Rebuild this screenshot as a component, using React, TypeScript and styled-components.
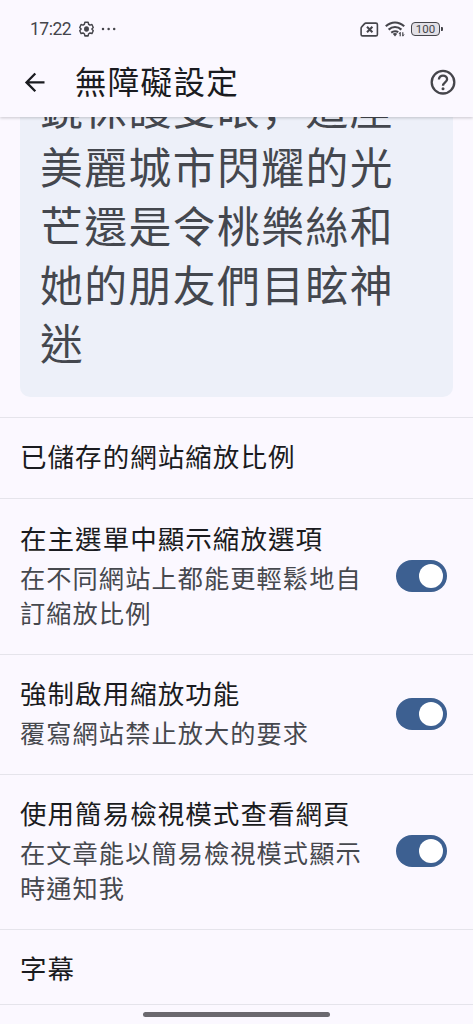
import React from "react";
import styled, { createGlobalStyle } from "styled-components";

const GlobalStyle = createGlobalStyle`
  * { box-sizing: border-box; }
  body {
    margin: 0;
    background: #fbf8ff;
    font-family: "Noto Sans CJK TC", sans-serif;
  }
`;

const Screen = styled.div`
  position: relative;
  display: flex;
  flex-direction: column;
  width: 473px;
  height: 1024px;
  overflow: hidden;
  background: #fbf8ff;
`;

const Header = styled.header`
  position: relative;
  z-index: 1;
  flex: none;
  height: 117px;
  background: #fbf8ff;
  box-shadow: 0 1px 3px rgba(0, 0, 0, 0.2);
`;

const StatusBar = styled.div`
  display: flex;
  align-items: center;
  height: 47px;
  padding: 11px 30px 0;
  color: #45454b;
`;

const Clock = styled.span`
  width: 49px;
  font: 400 17.5px/20px Roboto, sans-serif;
  letter-spacing: -0.5px;
`;

const StatusIcons = styled.div`
  display: flex;
  align-items: center;
  gap: 6px;
  margin-left: auto;
`;

const Toolbar = styled.div`
  display: flex;
  align-items: center;
  height: 70px;
  padding: 0 16px 0 22px;
  color: #1a1b20;
`;

const Title = styled.h1`
  flex: 1;
  margin: 0 0 4px 27px;
  font-size: 31.5px;
  line-height: 44px;
  font-weight: 400;
  letter-spacing: 1.3px;
`;

const PreviewArea = styled.section`
  flex: none;
  display: flex;
  flex-direction: column;
  justify-content: flex-end;
  height: 300px;
  padding: 0 20px 20px;
  overflow: hidden;
`;

const PreviewCard = styled.p`
  flex: none;
  margin: 0;
  padding: 24px 20px 26px;
  border-radius: 10px;
  background: #edf0f9;
  color: #44474e;
  font-size: 42.8px;
  line-height: 58.7px;
  letter-spacing: 1.45px;
`;

const Comma = styled.span`
  font-family: "Noto Sans CJK SC", sans-serif;
`;

const Row = styled.div<{ $height: number; $shift?: number }>`
  flex: none;
  display: flex;
  align-items: center;
  justify-content: space-between;
  height: ${(p) => p.$height}px;
  padding: ${(p) => Math.max(0, -(p.$shift ?? 0))}px 26px ${(p) => Math.max(0, p.$shift ?? 0)}px 20px;
  border-top: 1.5px solid #e5e4eb;
`;

const RowText = styled.div`
  width: 350px;
`;

const RowTitle = styled.div`
  color: #1a1b20;
  font-size: 26.5px;
  line-height: 40px;
  letter-spacing: 1.05px;
`;

const RowSummary = styled.div`
  margin-top: 2px;
  margin-bottom: 4px;
  color: #46484e;
  font-size: 25.2px;
  line-height: 35px;
  letter-spacing: 1.1px;
`;

const Track = styled.div`
  flex: none;
  display: flex;
  align-items: center;
  justify-content: flex-end;
  width: 51px;
  height: 32px;
  padding-right: 4px;
  border-radius: 16px;
  background: #3d6091;
`;

const Thumb = styled.div`
  width: 24px;
  height: 24px;
  border-radius: 50%;
  background: #fff;
`;

const HomeIndicator = styled.div`
  position: absolute;
  left: 143px;
  bottom: 7px;
  width: 187px;
  height: 5px;
  border-radius: 3px;
  background: #6b696f;
`;

const GearIcon = () => (
  <svg width="15" height="16" viewBox="0 0 24 24" preserveAspectRatio="none" fill="none" stroke="currentColor" strokeWidth="2.3" strokeLinejoin="round">
    <path d="M9.4 1.8h5.2l.8 3.1 2.2 1.3 3.1-.9 2.1 4.4-2.2 2.3 2.2 2.6-2.1 4.2-3.1-.9-2.2 1.3-.8 3.1H9.4l-.8-3.1-2.2-1.3-3.1.9-2.1-4.2L3.4 12 1.2 9.7l2.1-4.4 3.1.9 2.2-1.3z" />
    <circle cx="12" cy="12" r="2.8" fill="currentColor" />
  </svg>
);

const DotsIcon = () => (
  <svg width="16" height="4" viewBox="0 0 16 4" fill="currentColor" style={{ marginLeft: 7 }}>
    <circle cx="2" cy="2" r="1.25" />
    <circle cx="7.6" cy="2" r="1.25" />
    <circle cx="13.2" cy="2" r="1.25" />
  </svg>
);

const SimIcon = () => (
  <svg width="19" height="15" viewBox="0 0 19 15" fill="none" stroke="currentColor">
    <path d="M5.8 1.1h10.1q1.5 0 1.5 1.5v9.8q0 1.5-1.5 1.5H2.6q-1.5 0-1.5-1.5V6.4q0-.9.6-1.5l2.7-3q.6-.8 1.4-.8z" strokeWidth="1.6" />
    <path d="M7 4.7l5.4 5.6M12.4 4.7L7 10.3" strokeWidth="2" />
  </svg>
);

const WifiIcon = () => (
  <svg width="20" height="16" viewBox="0 0 20 16" fill="none" stroke="currentColor">
    <path d="M.8 5.3Q5 1.5 10 1.5t9.2 3.8M3.6 8.6Q6.5 6 10 6t6.4 2.6" strokeWidth="2.2" />
    <path d="M6.2 11.6Q8 10.2 10 10.2t3.2 1.1" strokeWidth="2" />
    <path d="M7.7 12.8l2.3 2.7 2.3-2.7Q10 11.4 7.7 12.8z" fill="currentColor" stroke="none" />
    <path d="M15.2 11.2v4M17.8 11.2v4" strokeWidth="1.2" />
    <path d="M14 13l1.2-1.6M17.8 15l1.3-1.6" strokeWidth="1" />
  </svg>
);

const Battery = styled.div`
  display: flex;
  align-items: center;
  gap: 1px;
`;

const BatteryBody = styled.div`
  display: flex;
  align-items: center;
  justify-content: center;
  width: 29px;
  height: 14px;
  border: 1px solid #45454b;
  border-radius: 4px;
  background: #e2e0e6;
  font: 400 11.5px/12px Roboto, sans-serif;
`;

const BatteryTip = styled.div`
  width: 2px;
  height: 4px;
  border-radius: 0 1px 1px 0;
  background: #45454b;
`;

const BackIcon = () => (
  <svg width="26" height="26" viewBox="0 0 26 26" fill="none" stroke="currentColor" strokeWidth="2.3">
    <path d="M22.5 13.4H5M13.3 4.5L4.5 13.4l8.8 8.9" />
  </svg>
);

const HelpIcon = () => (
  <svg width="28" height="28" viewBox="0 0 28 28" fill="none" stroke="#45454b" strokeWidth="2.3">
    <circle cx="14" cy="14.2" r="11.3" />
    <path d="M9.9 11.5c0-2.3 1.8-3.9 4.1-3.9s4.1 1.6 4.1 3.7c0 3-4.1 3.3-4.1 6.5" />
    <circle cx="14" cy="20.7" r="1.5" fill="#45454b" stroke="none" />
  </svg>
);

const Switch = () => (
  <Track role="switch" aria-checked="true">
    <Thumb />
  </Track>
);

interface Setting {
  title: string;
  summary?: string;
  height: number;
  shift?: number;
}

const settings: Setting[] = [
  { title: "已儲存的網站縮放比例", height: 81, shift: 4 },
  { title: "在主選單中顯示縮放選項", summary: "在不同網站上都能更輕鬆地自訂縮放比例", height: 156, shift: 2 },
  { title: "強制啟用縮放功能", summary: "覆寫網站禁止放大的要求", height: 120, shift: 2 },
  { title: "使用簡易檢視模式查看網頁", summary: "在文章能以簡易檢視模式顯示時通知我", height: 155, shift: 2 },
  { title: "字幕", height: 75, shift: -2 },
];

export default function App() {
  return (
    <Screen>
      <GlobalStyle />
      <Header>
        <StatusBar>
          <Clock>17:22</Clock>
          <GearIcon />
          <DotsIcon />
          <StatusIcons>
            <SimIcon />
            <WifiIcon />
            <Battery>
              <BatteryBody>100</BatteryBody>
              <BatteryTip />
            </Battery>
          </StatusIcons>
        </StatusBar>
        <Toolbar>
          <BackIcon />
          <Title>無障礙設定</Title>
          <HelpIcon />
        </Toolbar>
      </Header>
      <PreviewArea>
        <PreviewCard>
          鏡保護雙眼<Comma>，</Comma>這座美麗城市閃耀的光芒還是令桃樂絲和她的朋友們目眩神迷
        </PreviewCard>
      </PreviewArea>
      {settings.map((s) => (
        <Row key={s.title} $height={s.height} $shift={s.shift}>
          <RowText>
            <RowTitle>{s.title}</RowTitle>
            {s.summary && <RowSummary>{s.summary}</RowSummary>}
          </RowText>
          {s.summary && <Switch />}
        </Row>
      ))}
      <Row $height={20} />
      <HomeIndicator />
    </Screen>
  );
}
